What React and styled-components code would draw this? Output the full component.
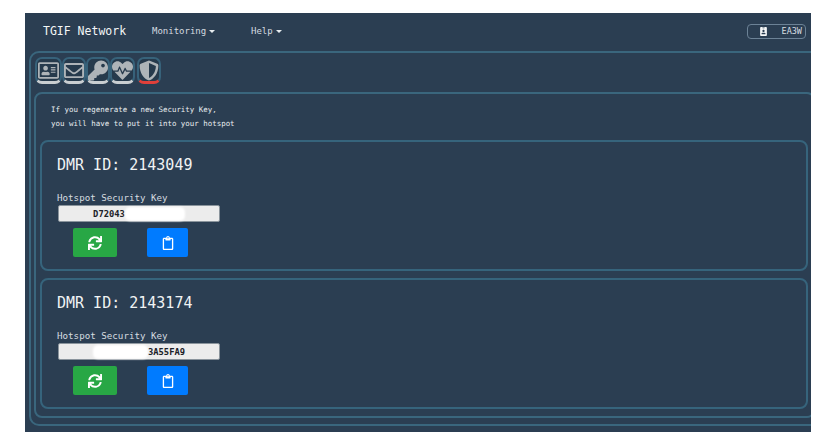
import React from "react";
import styled, { createGlobalStyle } from "styled-components";
import { FaRegAddressCard, FaRegEnvelope, FaKey, FaHeartbeat, FaShieldAlt, FaSync, FaRegClipboard, FaIdBadge } from "react-icons/fa";

const Global = createGlobalStyle`
  html, body { margin: 0; padding: 0; background: #fff; }
  body { font-family: "DejaVu Sans Mono", monospace; }
`;
const Page = styled.div`
  width: 835px; height: 436px; box-sizing: border-box;
  padding: 13px 24px 4px 25px; overflow: hidden;
`;
const Shell = styled.div`
  height: 419px; background: #2b3e52; overflow: hidden;
  display: flex; flex-direction: column;
`;
const Nav = styled.nav`
  height: 36px; flex: none; display: flex; align-items: center;
  padding: 0 5px 2px 18px; color: #e8edf0;
`;
const Brand = styled.div`font-size: 11.5px; font-weight: 400; width: 109px; color: #f4f6f7;`;
const Menu = styled.div`
  font-size: 9px; color: #d5dce0; display: flex; align-items: center; gap: 3px;
  width: ${p => p.$w}px;
  &::after { content: ""; border-top: 3px solid #e8edf0; border-left: 3px solid transparent; border-right: 3px solid transparent; }
`;
const Spacer = styled.div`flex: 1;`;
const UserBtn = styled.div`
  width: 59px; height: 15px; border: 1px solid #6c8296; border-radius: 4px;
  display: flex; align-items: center; justify-content: space-between;
  padding: 0 3px 0 12px; box-sizing: border-box; font-size: 8.5px; color: #d5dce0;
  svg { width: 7px; height: 9px; color: #f4f6f7; }
`;
const Outer = styled.div`
  flex: none; height: 375px; margin-left: 4px; margin-right: -12px;
  border: 2px solid #3a667d; border-radius: 10px; box-sizing: border-box;
  padding: 4px 12px 6px 3px;
  display: flex; flex-direction: column;
`;
const Tabs = styled.div`display: flex; height: 32px; flex: none; padding-left: 1px;`;
const Tab = styled.div`
  width: ${p => p.$w || 24}px; height: 27px; box-sizing: border-box; margin-right: ${p => p.$gap || 0}px;
  border: 2px solid #37627a; border-bottom: 3px solid ${p => p.$active ? "#e0403a" : "#c9ced1"};
  border-radius: 7px; background: #263a4c; color: #aeb4b8;
  display: flex; align-items: center; justify-content: center;
  svg { width: 21px; height: 21px; }
`;
const Panel = styled.div`
  flex: 1; margin: 3px -6px 0 0; border: 2px solid #3a667d; border-radius: 8px; box-sizing: border-box;
  padding: 0 5px 7px 4px; display: flex; flex-direction: column; gap: 7px;
`;
const Notice = styled.p`
  margin: 0; height: 39px; box-sizing: border-box; padding: 9px 0 0 11px;
  font-size: 7.45px; line-height: 14px; color: #e8edf0;
`;
const Card = styled.section`
  height: 131px; box-sizing: border-box; border: 2px solid #36647c; border-radius: 8px;
  padding: 15px 0 0 15px; flex: none;
`;
const Title = styled.h2`margin: 0; font-size: 15px; line-height: 17px; font-weight: 400; color: #f0f3f4;`;
const Label = styled.div`margin-top: 17px; padding-bottom: 1px; font-size: 9.2px; line-height: 13px; color: #d5dce0;`;
const KeyField = styled.div`
  width: 162px; height: 17px; margin-left: 1px; background: #ececec; border-radius: 2px;
  border: 1px solid #8a949c; box-sizing: border-box;
  display: flex; align-items: center; justify-content: center;
  font-size: 8.8px; font-weight: 700; color: #1b2127;
`;
const Redacted = styled.span`
  display: block; width: ${p => p.$w}px; height: 14px; background: #fff; border-radius: 5px; filter: blur(1px);
`;
const Actions = styled.div`display: flex; margin: 6px 0 0 16px; gap: 30px;`;
const Action = styled.div`
  width: ${p => p.$w}px; height: 29px; border-radius: 2px; background: ${p => p.$bg};
  color: #fff; display: flex; align-items: center; justify-content: center;
  svg { width: 14px; height: 14px; }
`;

const KeyCard = ({ id, before, text, after }) => (
  <Card>
    <Title>DMR ID: {id}</Title>
    <Label>Hotspot Security Key</Label>
    <KeyField>
      {before ? <Redacted $w={before} /> : null}
      {text}
      {after ? <Redacted $w={after} /> : null}
    </KeyField>
    <Actions>
      <Action $w={44} $bg="#28a745"><FaSync /></Action>
      <Action $w={41} $bg="#007bff"><FaRegClipboard /></Action>
    </Actions>
  </Card>
);

export default function App() {
  return (
    <Page>
      <Global />
      <Shell>
        <Nav>
          <Brand>TGIF Network</Brand>
          <Menu $w={99}>Monitoring</Menu>
          <Menu $w={60}>Help</Menu>
          <Spacer />
          <UserBtn><FaIdBadge />EA3W</UserBtn>
        </Nav>
        <Outer>
          <Tabs>
            <Tab $w={27}><FaRegAddressCard /></Tab>
            <Tab><FaRegEnvelope /></Tab>
            <Tab><FaKey /></Tab>
            <Tab $w={25} $gap={2}><FaHeartbeat /></Tab>
            <Tab $active><FaShieldAlt /></Tab>
          </Tabs>
          <Panel>
            <Notice>If you regenerate a new Security Key,<br />you will have to put it into your hotspot</Notice>
            <KeyCard id="2143049" text="D72043" after={60} />
            <KeyCard id="2143174" text="3A55FA9" before={55} />
          </Panel>
        </Outer>
      </Shell>
    </Page>
  );
}
